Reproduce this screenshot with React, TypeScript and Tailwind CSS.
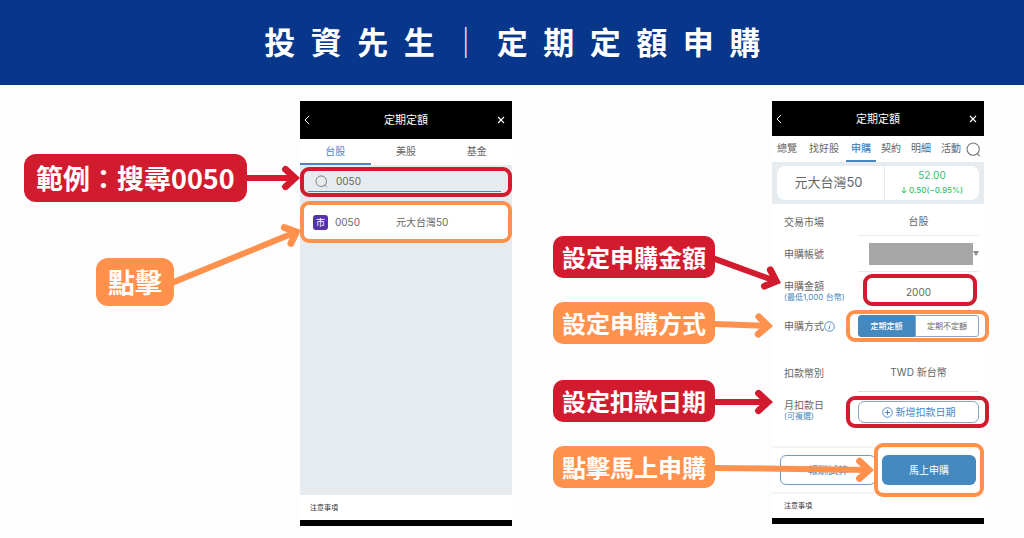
import { useState } from "react";
import type { ReactNode } from "react";

type Tone = "red" | "orange";

const fills = { red: "bg-[#d21b2f]", orange: "bg-[#ff914d]" };
const borders = { red: "border-[#d21b2f]", orange: "border-[#ff914d]" };
const strokes = { red: "#d21b2f", orange: "#ff914d" };

const MARKET_TABS = ["台股", "美股", "基金"];
const ORDER_TABS = ["總覽", "找好股", "申購", "契約", "明細", "活動"];

// Arrow drawn from (0, y1) to (x2, y2), measured from the right edge of its label
const Arrow = ({ tone, y1, x2, y2 }: { tone: Tone; y1: number; x2: number; y2: number }) => {
    const length = Math.hypot(x2, y2 - y1);
    const angle = (Math.atan2(y2 - y1, x2) * 180) / Math.PI;
    return (
        <svg
            width="52"
            height="42"
            viewBox="0 0 52 42"
            fill="none"
            className="relative z-20 shrink-0 overflow-visible pointer-events-none"
            aria-hidden="true"
        >
            <g transform={`translate(0 ${y1}) rotate(${angle}) translate(${length} 0)`} stroke={strokes[tone]}>
                <path d={`M${-length - 1} 0H-5`} strokeWidth="6" />
                <path d="M-14.5 -8.7L-5 0L-14.5 8.7" strokeWidth="6.8" strokeLinecap="round" />
            </g>
        </svg>
    );
};

const Highlight = ({ tone, className }: { tone: Tone; className: string }) => (
    <span
        className={`absolute z-10 rounded-[9px] border-4 pointer-events-none ${borders[tone]} ${className}`}
    />
);

const Callout = ({ tone, large, children }: { tone: Tone; large?: boolean; children: ReactNode }) => (
    <p
        className={`shrink-0 whitespace-nowrap font-bold text-white ${fills[tone]} ${
            large
                ? "rounded-[12px] px-3 py-2 text-[27px] leading-8"
                : "rounded-[10px] px-[9px] py-[9px] text-[24px] leading-6"
        }`}
    >
        {children}
    </p>
);

const BackIcon = () => (
    <svg width="6" height="10" viewBox="0 0 6 10" fill="none" stroke="#fff">
        <path d="M5 1L1 5L5 9" />
    </svg>
);

const CloseIcon = () => (
    <svg width="8" height="8" viewBox="0 0 8 8" fill="none" stroke="#fff" strokeWidth="1.2">
        <path d="M1 1L7 7M7 1L1 7" />
    </svg>
);

const SearchIcon = ({ size }: { size: number }) => (
    <svg width={size} height={size} viewBox="0 0 14 14" fill="none" stroke="#777" className="shrink-0">
        <circle cx="6.7" cy="6.7" r="5.7" />
        <path d="M10.6 10.9L12.6 12.9" strokeLinecap="round" />
    </svg>
);

const TitleBar = ({ className }: { className: string }) => (
    <div className={`flex items-center justify-between bg-black pl-1 pr-[7px] text-white ${className}`}>
        <button aria-label="返回" className="w-[11px]">
            <BackIcon />
        </button>
        <h2 className="text-[11px] leading-4">定期定額</h2>
        <button aria-label="關閉" className="w-2">
            <CloseIcon />
        </button>
    </div>
);

const SearchPhone = () => {
    const [market, setMarket] = useState("台股");
    const [keyword, setKeyword] = useState("0050");

    return (
        <div className="w-[212px] shrink-0 text-[#666]">
            <TitleBar className="h-[38px]" />
            <div className="grid h-[26px] grid-cols-3 bg-white text-[10px]">
                {MARKET_TABS.map((tab) => (
                    <button
                        key={tab}
                        onClick={() => setMarket(tab)}
                        className={`border-b-2 ${
                            market === tab ? "border-[#4a86c0] text-[#4a86c0]" : "border-transparent"
                        }`}
                    >
                        {tab}
                    </button>
                ))}
            </div>
            <div className="min-h-[330px] bg-[#e6ebef] pt-0.5">
                <div className="relative h-[30px] pl-2 pr-[11px] pt-1">
                    <label className="flex h-[21px] items-center gap-2 border-b border-[#4a86c0] px-[7px]">
                        <SearchIcon size={13} />
                        <input
                            aria-label="搜尋"
                            value={keyword}
                            onChange={(e) => setKeyword(e.target.value)}
                            className="min-w-0 flex-1 bg-transparent text-[10px] outline-none"
                        />
                    </label>
                    <Highlight tone="red" className="inset-0" />
                </div>
                <button className="relative mt-1 flex h-[42px] w-full items-center rounded-[9px] bg-white px-[13px] text-left text-[10px]">
                    <span className="grid size-[15px] place-items-center rounded-[3px] bg-[#5433a8] text-[9px] leading-none text-white">
                        市
                    </span>
                    <span className="ml-[7px] w-[61px]">0050</span>
                    <span>元大台灣50</span>
                    <Highlight tone="orange" className="inset-0" />
                </button>
            </div>
            <p className="bg-white px-[10px] text-[7px] leading-[25px] text-[#333]">注意事項</p>
            <div className="h-1.5 bg-black" />
        </div>
    );
};

const Field = ({
    label,
    note,
    className,
    children,
}: {
    label: ReactNode;
    note?: string;
    className: string;
    children: ReactNode;
}) => (
    <div className={`flex items-stretch pl-3 pr-[5px] ${className}`}>
        <div className="flex w-[74px] shrink-0 flex-col justify-center whitespace-nowrap leading-3">
            <span className="flex items-center">{label}</span>
            {note && <span className="text-[8px] leading-[10px] text-[#4a86c0]">{note}</span>}
        </div>
        {children}
    </div>
);

const OrderPhone = () => {
    const [tab, setTab] = useState("申購");
    const [amount, setAmount] = useState("2000");
    const [method, setMethod] = useState("定期定額");

    return (
        <div className="w-[212px] shrink-0 bg-white text-[10px] text-[#666]">
            <TitleBar className="h-[35px]" />
            <div className="flex h-[26px] items-stretch">
                {ORDER_TABS.map((name) => (
                    <button
                        key={name}
                        onClick={() => setTab(name)}
                        className={`shrink-0 border-b-2 ${name.length > 2 ? "px-[7px]" : "px-[5px]"} ${
                            tab === name ? "border-[#4a86c0] font-medium text-[#4a86c0]" : "border-transparent"
                        }`}
                    >
                        {name}
                    </button>
                ))}
                <button aria-label="搜尋">
                    <SearchIcon size={15} />
                </button>
            </div>

            <div className="bg-[#e6ebef] px-[5px] py-1">
                <div className="flex h-[34px] items-stretch rounded-[8px] bg-white">
                    <p className="flex flex-1 items-center justify-center pr-1 text-[13px]">元大台灣50</p>
                    <div className="flex w-[95px] flex-col items-center justify-center border-l border-[#e6ebef] text-[#34bf6b]">
                        <span className="text-[10px] leading-[15px]">52.00</span>
                        <span className="flex items-center gap-0.5 text-[8px] font-medium leading-[15px]">
                            <svg width="6" height="7" viewBox="0 0 6 7" fill="none" stroke="#34bf6b">
                                <path d="M3 0V6M0.5 3.5L3 6L5.5 3.5" />
                            </svg>
                            0.50(−0.95%)
                        </span>
                    </div>
                </div>
            </div>

            <Field label="交易市場" className="h-8 pt-1">
                <p className="flex flex-1 items-center justify-center border-b border-[#e6ebef]">台股</p>
            </Field>
            <Field label={<label htmlFor="account">申購帳號</label>} className="h-9">
                <div className="flex flex-1 items-center border-b border-[#e6ebef] pl-[11px]">
                    <select id="account" className="h-[22px] min-w-0 flex-1 appearance-none bg-[#a6a6a6]" />
                    <svg width="6" height="5" viewBox="0 0 6 5" fill="#888">
                        <path d="M0 0H6L3 5Z" />
                    </svg>
                </div>
            </Field>
            <Field
                label={<label htmlFor="amount">申購金額</label>}
                note="(最低1,000 台幣)"
                className="h-[38px]"
            >
                <div className="relative flex min-w-0 flex-1">
                    <input
                        id="amount"
                        value={amount}
                        onChange={(e) => setAmount(e.target.value)}
                        className="w-full min-w-0 bg-transparent pt-0.5 text-center text-[10px] outline-none"
                    />
                    <Highlight tone="red" className="top-0.5 bottom-1 left-[5px] right-0.5" />
                </div>
            </Field>
            <Field
                label={
                    <>
                        申購方式
                        <svg width="11" height="11" viewBox="0 0 11 11" fill="none" stroke="#4a86c0">
                            <circle cx="5.5" cy="5.5" r="4.8" strokeWidth="0.9" />
                            <path d="M5.9 4.6L5.1 8.2M6.2 2.6L6.1 3.3" />
                        </svg>
                    </>
                }
                className="h-8"
            >
                <div className="relative grid flex-1 grid-cols-[57fr_64fr] py-[5px] text-[8px]">
                    {["定期定額", "定期不定額"].map((name) => (
                        <button
                            key={name}
                            onClick={() => setMethod(name)}
                            className={`border first:rounded-l-[3px] nth-2:rounded-r-[3px] ${
                                method === name
                                    ? "border-[#4389c0] bg-[#4389c0] font-medium text-white"
                                    : "border-[#8ba6c4]"
                            }`}
                        >
                            {name}
                        </button>
                    ))}
                    <Highlight tone="orange" className="inset-y-0 -left-3 -right-2.5" />
                </div>
            </Field>
            <Field label="扣款幣別" className="mt-3 h-[38px]">
                <p className="flex flex-1 items-center justify-center border-b border-[#d9dde1]">
                    TWD 新台幣
                </p>
            </Field>
            <Field label="月扣款日" note="(可複選)" className="h-9">
                <div className="relative mt-1 flex flex-1 py-[5px]">
                    <button className="flex flex-1 items-center justify-center gap-[3px] rounded-[6px] border border-[#8ba6c4] text-[#4a86c0]">
                        <svg width="11" height="11" viewBox="0 0 11 11" fill="none" stroke="#4a86c0">
                            <circle cx="5.5" cy="5.5" r="4.8" strokeWidth="0.9" />
                            <path d="M5.5 3V8M3 5.5H8" />
                        </svg>
                        新增扣款日期
                    </button>
                    <Highlight tone="red" className="inset-y-0 -left-3 -right-2.5" />
                </div>
            </Field>

            <div className="mt-[18px] flex h-12 items-center gap-1.5 border-y-2 border-[#f2f4f8] px-2">
                <button className="h-[30px] flex-1 rounded-[6px] border border-[#6f9bc8] text-[#4a86c0]">
                    報酬試算
                </button>
                <div className="relative flex flex-1">
                    <button className="h-[30px] flex-1 rounded-[6px] bg-[#4389c0] text-white">馬上申購</button>
                    <Highlight tone="orange" className="-inset-x-2 -inset-y-3" />
                </div>
            </div>
            <p className="px-3 text-[7px] leading-6 text-[#333]">注意事項</p>
            <div className="h-1.5 bg-black" />
        </div>
    );
};

export default function App() {
    return (
        <div className="min-h-screen bg-[#fdfdfd] font-['Inter','Noto_Sans_CJK_TC',sans-serif]">
            <header className="bg-[#07368a] pb-[22px] pl-4 pt-[18px] text-center font-['Noto_Sans_CJK_TC',sans-serif]">
                <h1 className="text-[31px] font-bold leading-[45px] tracking-[0.5em] text-white">
                    投資先生<span className="font-light">｜</span>定期定額申購
                </h1>
            </header>

            <main className="flex flex-wrap justify-between gap-y-8 pb-3 pl-6 pr-10 pt-4">
                <section className="flex">
                    <div className="flex w-[276px] flex-col gap-14 pt-[53px] font-['Noto_Sans_CJK_TC',sans-serif]">
                        <div className="flex items-center">
                            <Callout tone="red" large>
                                範例：搜尋0050
                            </Callout>
                            <Arrow tone="red" y1={21} x2={53} y2={21} />
                        </div>
                        <div className="flex items-center pl-[72px]">
                            <Callout tone="orange" large>
                                點擊
                            </Callout>
                            <Arrow tone="orange" y1={21} x2={127} y2={-31} />
                        </div>
                    </div>
                    <SearchPhone />
                </section>

                <section className="flex">
                    <div className="flex w-[219px] flex-col gap-9 pt-[135px] font-['Noto_Sans_CJK_TC',sans-serif]">
                        <div className="flex flex-col gap-6">
                            <div className="flex items-center">
                                <Callout tone="red">設定申購金額</Callout>
                                <Arrow tone="red" y1={23} x2={66} y2={47} />
                            </div>
                            <div className="flex items-center">
                                <Callout tone="orange">設定申購方式</Callout>
                                <Arrow tone="orange" y1={22} x2={58} y2={24} />
                            </div>
                        </div>
                        <div className="flex flex-col gap-6">
                            <div className="flex items-center">
                                <Callout tone="red">設定扣款日期</Callout>
                                <Arrow tone="red" y1={22} x2={58} y2={22} />
                            </div>
                            <div className="flex items-center">
                                <Callout tone="orange">點擊馬上申購</Callout>
                                <Arrow tone="orange" y1={22} x2={159} y2={24} />
                            </div>
                        </div>
                    </div>
                    <OrderPhone />
                </section>
            </main>
        </div>
    );
}
